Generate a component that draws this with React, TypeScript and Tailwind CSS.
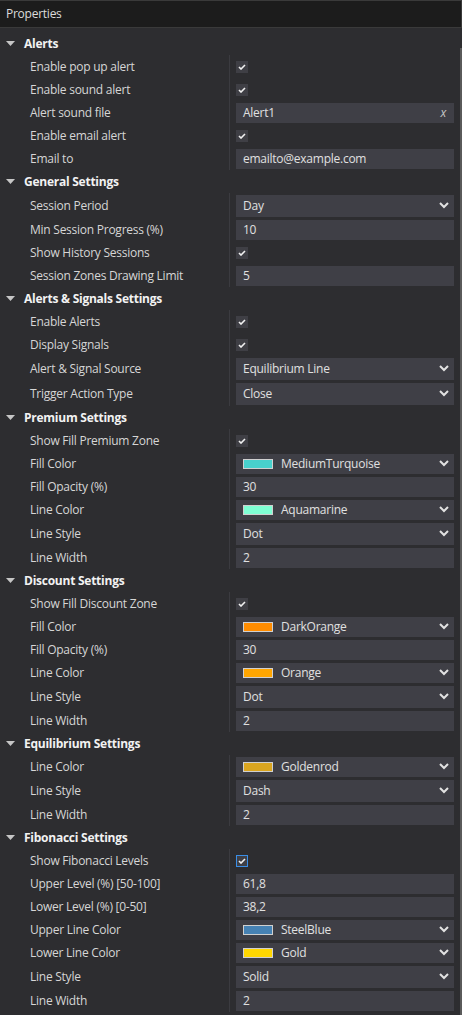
import React from 'react';

type Row = {
  label: string;
  kind: 'check' | 'text' | 'select' | 'color';
  value?: string;
  swatch?: string;
  clear?: boolean;
  focused?: boolean;
};

type Section = { title: string; rows: Row[] };

const sections: Section[] = [
  {
    title: 'Alerts',
    rows: [
      { label: 'Enable pop up alert', kind: 'check' },
      { label: 'Enable sound alert', kind: 'check' },
      { label: 'Alert sound file', kind: 'text', value: 'Alert1', clear: true },
      { label: 'Enable email alert', kind: 'check' },
      { label: 'Email to', kind: 'text', value: 'emailto@example.com' },
    ],
  },
  {
    title: 'General Settings',
    rows: [
      { label: 'Session Period', kind: 'select', value: 'Day' },
      { label: 'Min Session Progress (%)', kind: 'text', value: '10' },
      { label: 'Show History Sessions', kind: 'check' },
      { label: 'Session Zones Drawing Limit', kind: 'text', value: '5' },
    ],
  },
  {
    title: 'Alerts & Signals Settings',
    rows: [
      { label: 'Enable Alerts', kind: 'check' },
      { label: 'Display Signals', kind: 'check' },
      { label: 'Alert & Signal Source', kind: 'select', value: 'Equilibrium Line' },
      { label: 'Trigger Action Type', kind: 'select', value: 'Close' },
    ],
  },
  {
    title: 'Premium Settings',
    rows: [
      { label: 'Show Fill Premium Zone', kind: 'check' },
      { label: 'Fill Color', kind: 'color', value: 'MediumTurquoise', swatch: '#48d1cc' },
      { label: 'Fill Opacity (%)', kind: 'text', value: '30' },
      { label: 'Line Color', kind: 'color', value: 'Aquamarine', swatch: '#7fffd4' },
      { label: 'Line Style', kind: 'select', value: 'Dot' },
      { label: 'Line Width', kind: 'text', value: '2' },
    ],
  },
  {
    title: 'Discount Settings',
    rows: [
      { label: 'Show Fill Discount Zone', kind: 'check' },
      { label: 'Fill Color', kind: 'color', value: 'DarkOrange', swatch: '#ff8c00' },
      { label: 'Fill Opacity (%)', kind: 'text', value: '30' },
      { label: 'Line Color', kind: 'color', value: 'Orange', swatch: '#ffa500' },
      { label: 'Line Style', kind: 'select', value: 'Dot' },
      { label: 'Line Width', kind: 'text', value: '2' },
    ],
  },
  {
    title: 'Equilibrium Settings',
    rows: [
      { label: 'Line Color', kind: 'color', value: 'Goldenrod', swatch: '#daa520' },
      { label: 'Line Style', kind: 'select', value: 'Dash' },
      { label: 'Line Width', kind: 'text', value: '2' },
    ],
  },
  {
    title: 'Fibonacci Settings',
    rows: [
      { label: 'Show Fibonacci Levels', kind: 'check', focused: true },
      { label: 'Upper Level (%) [50-100]', kind: 'text', value: '61,8' },
      { label: 'Lower Level (%) [0-50]', kind: 'text', value: '38,2' },
      { label: 'Upper Line Color', kind: 'color', value: 'SteelBlue', swatch: '#4682b4' },
      { label: 'Lower Line Color', kind: 'color', value: 'Gold', swatch: '#ffd700' },
      { label: 'Line Style', kind: 'select', value: 'Solid' },
      { label: 'Line Width', kind: 'text', value: '2' },
    ],
  },
];

function Chevron() {
  return (
    <svg width="10" height="7" viewBox="0 0 10 7" className="mr-[5px] shrink-0">
      <polyline points="1,1 5,5 9,1" fill="none" stroke="#e2e2e2" strokeWidth="2" />
    </svg>
  );
}

function Check({ focused }: { focused?: boolean }) {
  return (
    <div
      className={`flex h-[12px] w-[12px] items-center justify-center bg-[#3f3f45] ${
        focused ? 'border border-[#3a8ee6]' : ''
      }`}
    >
      <svg width="8" height="6" viewBox="0 0 8 6">
        <path d="M1 3 L3 5 L7 1" fill="none" stroke="#f0f0f0" strokeWidth="1.6" />
      </svg>
    </div>
  );
}

function Value({ row }: { row: Row }) {
  if (row.kind === 'check') return <Check focused={row.focused} />;
  const tall = row.kind === 'select';
  return (
    <div
      className={`flex w-[218px] items-center bg-[#3f3f46] pl-[7px] text-[#e0e0e0] ${
        tall ? 'h-[22px]' : 'h-[20px]'
      }`}
    >
      {row.kind === 'color' && (
        <span
          className="mr-[8px] h-[10px] w-[30px] shrink-0 border border-[#d0d0d0]"
          style={{ backgroundColor: row.swatch }}
        />
      )}
      <span className="flex-1 whitespace-nowrap">{row.value}</span>
      {row.clear && <span className="mr-[8px] italic text-[#c8c8c8]">x</span>}
      {(row.kind === 'select' || row.kind === 'color') && <Chevron />}
    </div>
  );
}

function PropertyRow({ row }: { row: Row }) {
  return (
    <div className={`flex items-center ${row.kind === 'select' ? 'h-[25px]' : 'h-[23px]'}`}>
      <div className="w-[229px] whitespace-nowrap pl-[30px] text-[#d6d6d6]">{row.label}</div>
      <div className="w-px self-stretch bg-[#3b3b40]" />
      <div className="pl-[6px]">
        <Value row={row} />
      </div>
    </div>
  );
}

export default function App() {
  return (
    <div
      className="relative h-[1015px] w-[462px] overflow-hidden bg-[#2d2d30] text-[12px] leading-[16px] tracking-[-0.25px]"
      style={{ fontFamily: '"Open Sans", "Noto Sans", sans-serif' }}
    >
      <div className="flex h-[28px] items-center border-y border-r border-[#3a3a3a] bg-[#1c1c1c] pl-[6px] text-[#dcdcdc]">
        Properties
      </div>
      <div className="pt-[4px]">
        {sections.map((s) => (
          <div key={s.title}>
            <div className="flex h-[23px] items-center pl-[6px]">
              <svg width="9" height="5" viewBox="0 0 9 5">
                <polygon points="0,0 9,0 4.5,5" fill="#c6c6c6" />
              </svg>
              <span className="ml-[9px] font-bold text-[#f2f2f2]">{s.title}</span>
            </div>
            {s.rows.map((r, i) => (
              <PropertyRow key={i} row={r} />
            ))}
          </div>
        ))}
      </div>
      <div className="absolute bottom-0 right-0 top-[48px] w-[2px] bg-[#5a5a5a]" />
    </div>
  );
}
